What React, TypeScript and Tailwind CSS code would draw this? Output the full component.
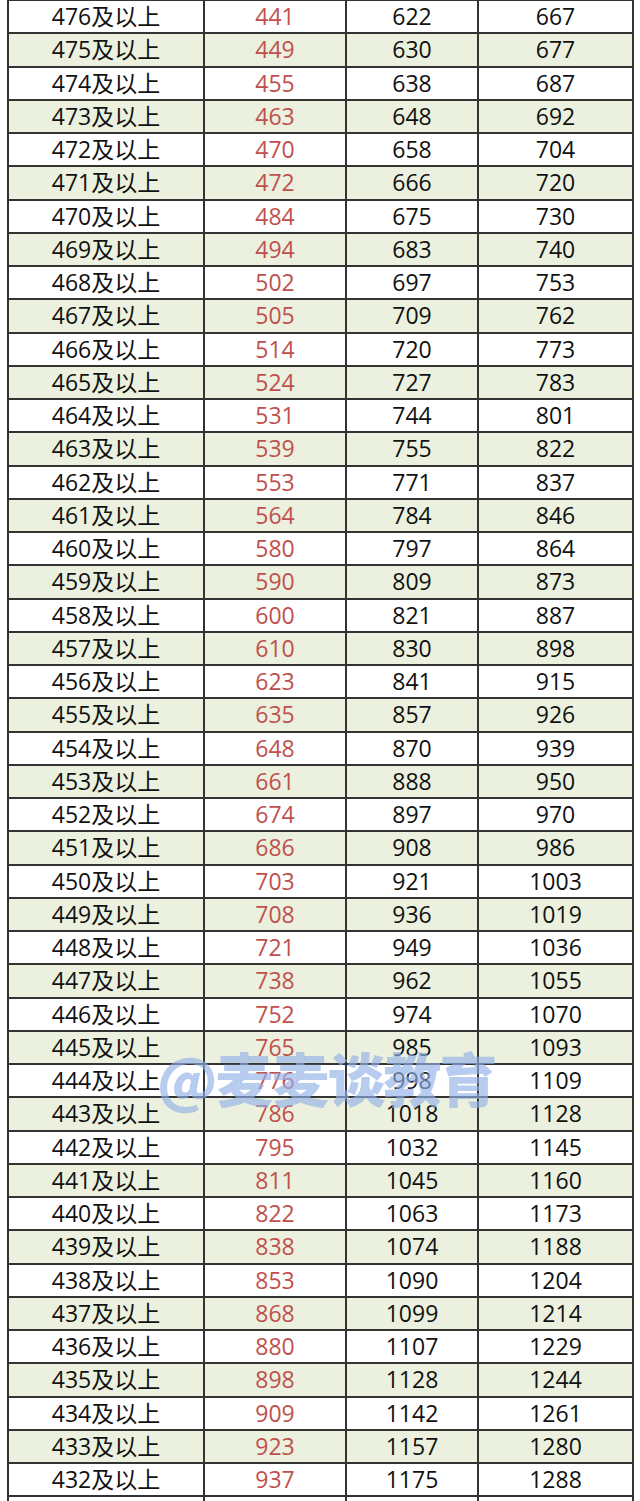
const rows: [number, number, number, number][] = [
  [476, 441, 622, 667],
  [475, 449, 630, 677],
  [474, 455, 638, 687],
  [473, 463, 648, 692],
  [472, 470, 658, 704],
  [471, 472, 666, 720],
  [470, 484, 675, 730],
  [469, 494, 683, 740],
  [468, 502, 697, 753],
  [467, 505, 709, 762],
  [466, 514, 720, 773],
  [465, 524, 727, 783],
  [464, 531, 744, 801],
  [463, 539, 755, 822],
  [462, 553, 771, 837],
  [461, 564, 784, 846],
  [460, 580, 797, 864],
  [459, 590, 809, 873],
  [458, 600, 821, 887],
  [457, 610, 830, 898],
  [456, 623, 841, 915],
  [455, 635, 857, 926],
  [454, 648, 870, 939],
  [453, 661, 888, 950],
  [452, 674, 897, 970],
  [451, 686, 908, 986],
  [450, 703, 921, 1003],
  [449, 708, 936, 1019],
  [448, 721, 949, 1036],
  [447, 738, 962, 1055],
  [446, 752, 974, 1070],
  [445, 765, 985, 1093],
  [444, 776, 998, 1109],
  [443, 786, 1018, 1128],
  [442, 795, 1032, 1145],
  [441, 811, 1045, 1160],
  [440, 822, 1063, 1173],
  [439, 838, 1074, 1188],
  [438, 853, 1090, 1204],
  [437, 868, 1099, 1214],
  [436, 880, 1107, 1229],
  [435, 898, 1128, 1244],
  [434, 909, 1142, 1261],
  [433, 923, 1157, 1280],
  [432, 937, 1175, 1288],
]

const cell = "flex items-center justify-center border-r-2 border-[#333]"

function Row({ r, striped }: { r?: [number, number, number, number]; striped: boolean }) {
  return (
    <div
      className={
        "flex h-[33.25px] border-b-2 border-[#333] " + (striped ? "bg-[#ebf1de]" : "bg-white")
      }
    >
      <div className={cell + " w-[196px]"}>{r ? `${r[0]}及以上` : ""}</div>
      <div className={cell + " w-[142px] text-[#c0504d]"}>{r ? r[1] : ""}</div>
      <div className={cell + " w-[132px]"}>{r ? r[2] : ""}</div>
      <div className={cell + " w-[155px]"}>{r ? r[3] : ""}</div>
    </div>
  )
}

export default function App() {
  return (
    <div className="relative h-[1501px] w-[640px] overflow-hidden bg-white font-['Open_Sans','Noto_Sans_CJK_SC',sans-serif] text-[23px] leading-none text-[#111]">
      <div className="ml-[7px] w-[627px] border-l-2 border-t border-[#333]">
        {rows.map((r, i) => (
          <Row key={r[0]} r={r} striped={i % 2 === 1} />
        ))}
        <Row striped={false} />
      </div>

      {/* watermark */}
      <div className="pointer-events-none absolute left-[157px] top-[1048px] font-['Noto_Sans_CJK_SC',sans-serif] text-[58px] font-black leading-none tracking-[-2px] text-[#93b2e8] opacity-65">
        @麦麦谈教育
      </div>
    </div>
  )
}
